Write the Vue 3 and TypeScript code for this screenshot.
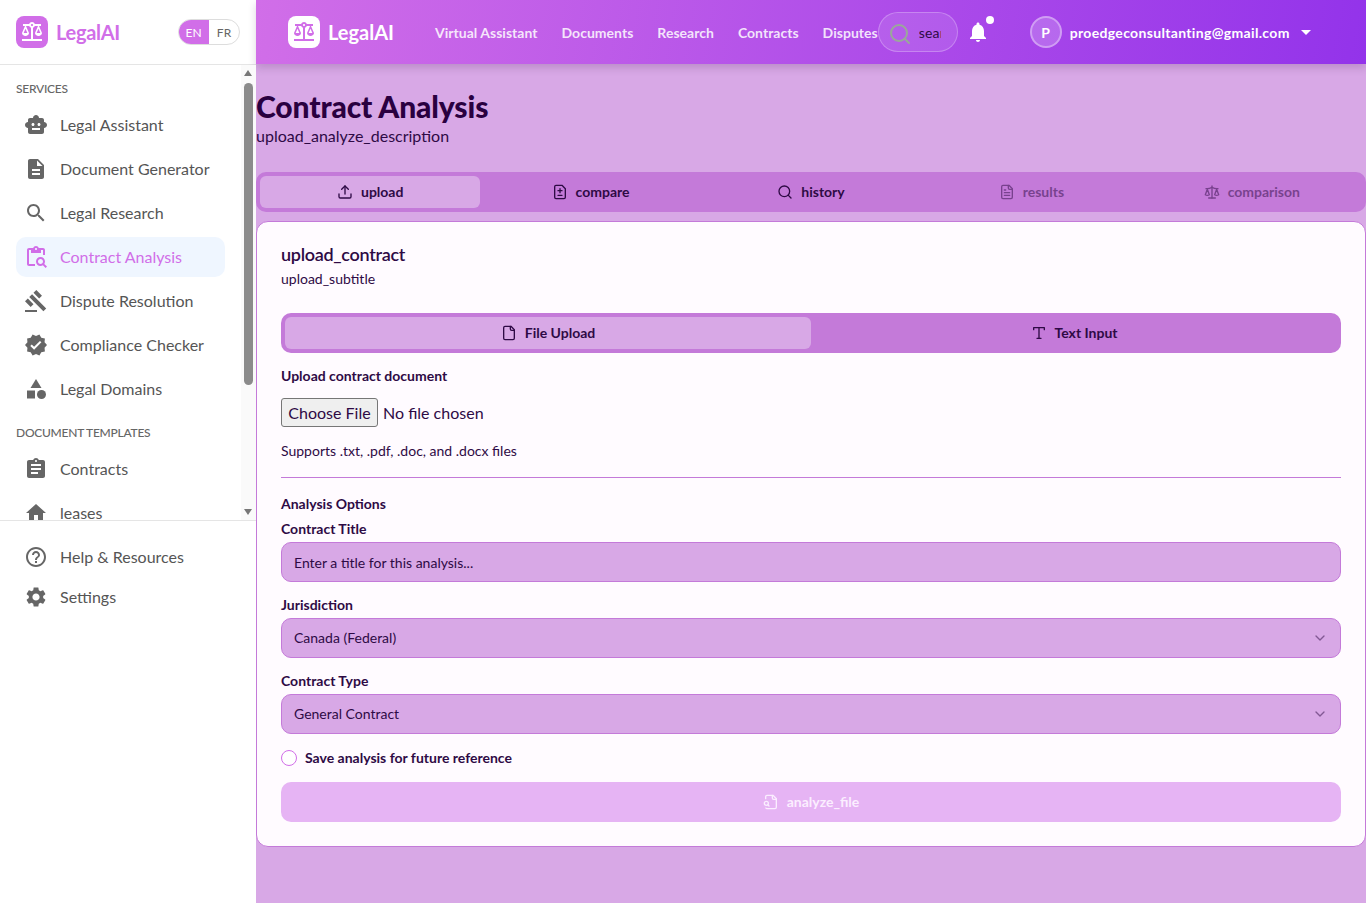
<template>
  <div class="app">
    <aside class="sidebar">
      <div class="side-head">
        <div class="brand">
          <div class="logo logo--side">
            <svg viewBox="0 0 24 24" class="mi" width="24" height="24"><path :d="balance" /></svg>
          </div>
          <span class="brand-name">LegalAI</span>
        </div>
        <div class="lang">
          <span class="lang-on">EN</span>
          <span class="lang-off">FR</span>
        </div>
      </div>

      <div class="side-scroll">
        <nav class="side-nav">
          <template v-for="group in navGroups" :key="group.title">
            <p class="group-title">{{ group.title }}</p>
            <a v-for="item in group.items" :key="item.label" class="nav-item" :class="{ 'nav-item--active': item.active }">
              <svg viewBox="0 0 24 24" width="24" height="24" class="mi">
                <path v-for="d in item.icon" :key="d" :d="d" />
                <circle v-if="item.circle" cx="17.5" cy="17.5" r="4.5" />
              </svg>
              <span>{{ item.label }}</span>
            </a>
          </template>
        </nav>
        <div class="fake-scrollbar">
          <span class="arrow arrow--up"></span>
          <span class="thumb"></span>
          <span class="arrow arrow--down"></span>
        </div>
      </div>

      <div class="side-foot">
        <a v-for="item in footItems" :key="item.label" class="foot-item">
          <svg viewBox="0 0 24 24" width="24" height="24" class="mi"><path :d="item.icon" /></svg>
          <span>{{ item.label }}</span>
        </a>
      </div>
    </aside>

    <div class="main">
      <header class="topbar">
        <div class="brand brand--top">
          <div class="logo logo--top">
            <svg viewBox="0 0 24 24" class="mi" width="24" height="24"><path :d="balance" /></svg>
          </div>
          <span class="brand-name-top">LegalAI</span>
        </div>
        <nav class="top-nav">
          <a v-for="link in topLinks" :key="link">{{ link }}</a>
        </nav>
        <div class="search">
          <svg viewBox="0 0 24 24" width="24" height="24" class="search-ic"><circle cx="11" cy="11" r="8" /><path d="m21 21-4.3-4.3" /></svg>
          <input class="search-input" type="text" placeholder="search..." />
        </div>
        <div class="bell">
          <svg viewBox="0 0 24 24" width="24" height="24"><path :d="bellPath" /></svg>
          <span class="bell-dot"></span>
        </div>
        <div class="user">
          <span class="avatar">P</span>
          <span class="email">proedgeconsultanting@gmail.com</span>
          <svg viewBox="0 0 24 24" width="24" height="24"><path d="M7 10l5 5 5-5z" /></svg>
        </div>
      </header>

      <main class="content">
        <h1 class="page-title">Contract Analysis</h1>
        <p class="page-desc">upload_analyze_description</p>

        <div class="tabs">
          <button v-for="tab in tabs" :key="tab.label" class="tab" :class="{ 'tab--active': tab.active, 'tab--off': tab.off }">
            <svg viewBox="0 0 24 24" width="16" height="16" class="ln"><path v-for="d in tab.icon" :key="d" :d="d" /></svg>
            <span>{{ tab.label }}</span>
          </button>
        </div>

        <section class="card">
          <h2 class="card-title">upload_contract</h2>
          <p class="card-sub">upload_subtitle</p>

          <div class="subtabs">
            <button class="subtab subtab--active">
              <svg viewBox="0 0 24 24" width="16" height="16" class="ln"><path v-for="d in fileIcon" :key="d" :d="d" /></svg>
              <span>File Upload</span>
            </button>
            <button class="subtab">
              <svg viewBox="0 0 24 24" width="16" height="16" class="ln"><path v-for="d in typeIcon" :key="d" :d="d" /></svg>
              <span>Text Input</span>
            </button>
          </div>

          <label class="label label--upload">Upload contract document</label>
          <input class="file" type="file" />
          <p class="help">Supports .txt, .pdf, .doc, and .docx files</p>
          <hr class="rule" />

          <p class="options">Analysis Options</p>
          <label class="label label--first">Contract Title</label>
          <input class="field" type="text" placeholder="Enter a title for this analysis..." />

          <label class="label">Jurisdiction</label>
          <div class="select">
            <span>Canada (Federal)</span>
            <svg viewBox="0 0 24 24" width="16" height="16" class="ln chev"><path d="m6 9 6 6 6-6" /></svg>
          </div>

          <label class="label">Contract Type</label>
          <div class="select">
            <span>General Contract</span>
            <svg viewBox="0 0 24 24" width="16" height="16" class="ln chev"><path d="m6 9 6 6 6-6" /></svg>
          </div>

          <div class="save">
            <span class="radio"></span>
            <span class="save-text">Save analysis for future reference</span>
          </div>

          <button class="analyze">
            <svg viewBox="0 0 24 24" width="16" height="16" class="ln"><path v-for="d in fileSearch" :key="d" :d="d" /><circle cx="5" cy="14" r="3" /></svg>
            <span>analyze_file</span>
          </button>
        </section>
      </main>
    </div>
  </div>
</template>

<script setup lang="ts">
const balance = "M13 7.83c.85-.3 1.53-.98 1.83-1.83H18l-3 7c0 1.66 1.57 3 3.5 3s3.5-1.34 3.5-3l-3-7h2V4h-6.17c-.41-1.17-1.52-2-2.83-2s-2.42.83-2.83 2H3v2h2l-3 7c0 1.66 1.57 3 3.5 3S9 14.66 9 13L6 6h3.17c.3.85.98 1.53 1.83 1.83V19H2v2h20v-2h-9V7.83zM20.37 13h-3.74l1.87-4.36L20.37 13zm-13 0H3.63L5.5 8.64 7.37 13zM12 6c-.55 0-1-.45-1-1 0-.55.45-1 1-1s1 .45 1 1c0 .55-.45 1-1 1z"
const scale = [
  "m16 16 3-8 3 8c-.87.65-1.92 1-3 1s-2.13-.35-3-1Z",
  "m2 16 3-8 3 8c-.87.65-1.92 1-3 1s-2.13-.35-3-1Z",
  "M7 21h10",
  "M12 3v18",
  "M3 7h2c2 0 5-1 7-2 2 1 5 2 7 2h2",
]
const fileIcon = ["M15 2H6a2 2 0 0 0-2 2v16a2 2 0 0 0 2 2h12a2 2 0 0 0 2-2V7Z", "M14 2v4a2 2 0 0 0 2 2h4"]
const typeIcon = ["M4 7V4h16v3", "M9 20h6", "M12 4v16"]
const fileSearch = [
  "M14 2v4a2 2 0 0 0 2 2h4",
  "M4.268 21a2 2 0 0 0 1.727 1H18a2 2 0 0 0 2-2V7l-5-5H6a2 2 0 0 0-2 2v3",
  "m9 18-1.5-1.5",
]
const bellPath = "M12 22c1.1 0 2-.9 2-2h-4c0 1.1.89 2 2 2zm6-6v-5c0-3.07-1.64-5.64-4.5-6.32V4c0-.83-.67-1.5-1.5-1.5s-1.5.67-1.5 1.5v.68C7.63 5.36 6 7.92 6 11v5l-2 2v1h16v-1l-2-2z"

const navGroups = [
  {
    title: "SERVICES",
    items: [
      { label: "Legal Assistant", icon: ["M20 9V7c0-1.1-.9-2-2-2h-3c0-1.66-1.34-3-3-3S9 3.34 9 5H6c-1.1 0-2 .9-2 2v2c-1.66 0-3 1.34-3 3s1.34 3 3 3v4c0 1.1.9 2 2 2h12c1.1 0 2-.9 2-2v-4c1.66 0 3-1.34 3-3s-1.34-3-3-3zM7.5 11.5c0-.83.67-1.5 1.5-1.5s1.5.67 1.5 1.5S9.83 13 9 13s-1.5-.67-1.5-1.5zM16 17H8v-2h8v2zm-1-4c-.83 0-1.5-.67-1.5-1.5S14.17 10 15 10s1.5.67 1.5 1.5S15.83 13 15 13z"] },
      { label: "Document Generator", icon: ["M14 2H6c-1.1 0-1.99.9-1.99 2L4 20c0 1.1.89 2 1.99 2H18c1.1 0 2-.9 2-2V8l-6-6zm2 16H8v-2h8v2zm0-4H8v-2h8v2zm-3-5V3.5L18.5 9H13z"] },
      { label: "Legal Research", icon: ["M15.5 14h-.79l-.28-.27C15.41 12.59 16 11.11 16 9.5 16 5.91 13.09 3 9.5 3S3 5.91 3 9.5 5.91 16 9.5 16c1.61 0 3.09-.59 4.23-1.57l.27.28v.79l5 4.99L20.49 19l-4.99-5zm-6 0C7.01 14 5 11.99 5 9.5S7.01 5 9.5 5 14 7.01 14 9.5 11.99 14 9.5 14z"] },
      { label: "Contract Analysis", active: true, icon: ["M5 5h2v3h10V5h2v5h2V5c0-1.1-.9-2-2-2h-4.18C14.4 1.84 13.3 1 12 1s-2.4.84-2.82 2H5c-1.1 0-2 .9-2 2v14c0 1.1.9 2 2 2h6v-2H5V5zm7-2c.55 0 1 .45 1 1s-.45 1-1 1-1-.45-1-1 .45-1 1-1z", "M20.3 18.9c.4-.7.7-1.5.7-2.4 0-2.5-2-4.5-4.5-4.5S12 14 12 16.5s2 4.5 4.5 4.5c.9 0 1.7-.3 2.4-.7l2.7 2.7 1.4-1.4-2.7-2.7zm-3.8.1c-1.4 0-2.5-1.1-2.5-2.5s1.1-2.5 2.5-2.5 2.5 1.1 2.5 2.5-1.1 2.5-2.5 2.5z"] },
      { label: "Dispute Resolution", icon: ["M1 21h12v2H1zM5.245 8.07l2.83-2.827 14.14 14.142-2.828 2.828zM12.317 1l5.657 5.656-2.83 2.83-5.654-5.66zM3.825 9.485l5.657 5.657-2.828 2.828-5.657-5.657z"] },
      { label: "Compliance Checker", icon: ["M23 12l-2.44-2.79.34-3.69-3.61-.82-1.89-3.2L12 2.96 8.6 1.5 6.71 4.69 3.1 5.5l.34 3.7L1 12l2.44 2.79-.34 3.7 3.61.82L8.6 22.5l3.4-1.47 3.4 1.46 1.89-3.19 3.61-.82-.34-3.69L23 12zm-12.91 4.72l-3.8-3.81 1.48-1.48 2.32 2.33 5.85-5.87 1.48 1.48-7.33 7.35z"] },
      { label: "Legal Domains", circle: true, icon: ["M12 2l-5.5 9h11z", "M3 13.5h8v8H3z"] },
    ],
  },
  {
    title: "DOCUMENT TEMPLATES",
    items: [
      { label: "Contracts", icon: ["M19 3h-4.18C14.4 1.84 13.3 1 12 1c-1.3 0-2.4.84-2.82 2H5c-1.1 0-2 .9-2 2v14c0 1.1.9 2 2 2h14c1.1 0 2-.9 2-2V5c0-1.1-.9-2-2-2zm-7 0c.55 0 1 .45 1 1s-.45 1-1 1-1-.45-1-1 .45-1 1-1zm2 14H7v-2h7v2zm3-4H7v-2h10v2zm0-4H7V7h10v2z"] },
      { label: "leases", icon: ["M10 20v-6h4v6h5v-8h3L12 3 2 12h3v8z"] },
    ],
  },
]

const footItems = [
  { label: "Help & Resources", icon: "M11 18h2v-2h-2v2zm1-16C6.48 2 2 6.48 2 12s4.48 10 10 10 10-4.48 10-10S17.52 2 12 2zm0 18c-4.41 0-8-3.59-8-8s3.59-8 8-8 8 3.59 8 8-3.59 8-8 8zm0-14c-2.21 0-4 1.79-4 4h2c0-1.1.9-2 2-2s2 .9 2 2c0 2-3 1.75-3 5h2c0-2.25 3-2.5 3-5 0-2.21-1.79-4-4-4z" },
  { label: "Settings", icon: "M19.14 12.94c.04-.3.06-.61.06-.94 0-.32-.02-.64-.07-.94l2.03-1.58c.18-.14.23-.41.12-.61l-1.92-3.32c-.12-.22-.37-.29-.59-.22l-2.39.96c-.5-.38-1.03-.7-1.62-.94l-.36-2.54c-.04-.24-.24-.41-.48-.41h-3.84c-.24 0-.43.17-.47.41l-.36 2.54c-.59.24-1.13.57-1.62.94l-2.39-.96c-.22-.08-.47 0-.59.22L2.74 8.87c-.12.21-.08.47.12.61l2.03 1.58c-.05.3-.09.63-.09.94s.02.64.07.94l-2.03 1.58c-.18.14-.23.41-.12.61l1.92 3.32c.12.22.37.29.59.22l2.39-.96c.5.38 1.03.7 1.62.94l.36 2.54c.05.24.24.41.48.41h3.84c.24 0 .44-.17.47-.41l.36-2.54c.59-.24 1.13-.56 1.62-.94l2.39.96c.22.08.47 0 .59-.22l1.92-3.32c.12-.22.07-.47-.12-.61l-2.01-1.58zM12 15.6c-1.98 0-3.6-1.62-3.6-3.6s1.62-3.6 3.6-3.6 3.6 1.62 3.6 3.6-1.62 3.6-3.6 3.6z" },
]

const topLinks = ["Virtual Assistant", "Documents", "Research", "Contracts", "Disputes"]

const tabs = [
  { label: "upload", active: true, icon: ["M21 15v4a2 2 0 0 1-2 2H5a2 2 0 0 1-2-2v-4", "M17 8l-5-5-5 5", "M12 3v12"] },
  { label: "compare", icon: ["M15 2H6a2 2 0 0 0-2 2v16a2 2 0 0 0 2 2h12a2 2 0 0 0 2-2V7Z", "M9 10h6", "M12 13V7", "M9 17h6"] },
  { label: "history", icon: ["M11 3a8 8 0 1 0 0 16 8 8 0 0 0 0-16Z", "m21 21-4.3-4.3"] },
  { label: "results", off: true, icon: ["M15 2H6a2 2 0 0 0-2 2v16a2 2 0 0 0 2 2h12a2 2 0 0 0 2-2V7Z", "M14 2v4a2 2 0 0 0 2 2h4", "M10 9H8", "M16 13H8", "M16 17H8"] },
  { label: "comparison", off: true, icon: scale },
]
</script>

<style scoped>
.app { display: flex; height: 903px; overflow: hidden; font-family: Lato, "Noto Sans", sans-serif; color: #2e0a45; }
.ln { fill: none; stroke: currentColor; stroke-width: 2; stroke-linecap: round; stroke-linejoin: round; flex-shrink: 0; }
.mi { fill: currentColor; flex-shrink: 0; }

.sidebar { width: 256px; flex-shrink: 0; background: #fff; display: flex; flex-direction: column; }
.side-head { height: 64px; flex-shrink: 0; padding: 0 16px; display: flex; align-items: center; justify-content: space-between; border-bottom: 1px solid #e5e5e5; }
.brand { display: flex; align-items: center; gap: 8px; }
.logo { width: 32px; height: 32px; border-radius: 8px; display: flex; align-items: center; justify-content: center; }
.logo--side { background: #d16ee8; color: #fff; }
.logo--top { background: #fff; color: #d16ee8; }
.brand-name { font-size: 20px; font-weight: 700; letter-spacing: -0.3px; color: #d16ee8; }
.lang { display: flex; width: 62px; height: 26px; box-sizing: border-box; border: 1px solid #ddd; border-radius: 13px; overflow: hidden; font-size: 12px; line-height: 26px; text-align: center; }
.lang-on { width: 31px; margin: -1px 0 -1px -1px; line-height: 28px; background: #d16ee8; color: #fff; }
.lang-off { flex: 1; color: #666; }

.side-scroll { position: relative; height: 455px; flex-shrink: 0; overflow: hidden; }
.side-nav { padding: 15px 31px 0 16px; }
.group-title { margin: 0 0 7px; height: 18px; font-size: 12px; line-height: 18px; font-weight: 500; letter-spacing: -0.25px; color: #666; }
.nav-item + .group-title { margin-top: 15px; }
.nav-item { display: flex; align-items: center; gap: 12px; height: 40px; margin-bottom: 4px; padding: 0 8px; border-radius: 10px; font-size: 16px; color: #555; }
.nav-item span, .foot-item span { margin-top: -2px; }
.nav-item .mi { color: #666; }
.nav-item--active { background: #eff6ff; color: #d16ee8; }
.nav-item--active .mi { color: #d16ee8; }
.fake-scrollbar { position: absolute; top: 0; right: 0; bottom: 0; width: 15px; background: #fafafa; }
.thumb { position: absolute; left: 3px; top: 18px; width: 9px; height: 302px; border-radius: 5px; background: #8b8b8b; }
.arrow { position: absolute; left: 3px; width: 0; height: 0; border-left: 4.5px solid transparent; border-right: 4.5px solid transparent; }
.arrow--up { top: 5px; border-bottom: 6px solid #777; }
.arrow--down { bottom: 5px; border-top: 6px solid #777; }

.side-foot { border-top: 1px solid #e5e5e5; padding: 16px 16px; }
.foot-item { display: flex; align-items: center; gap: 12px; height: 40px; padding: 0 8px; font-size: 16px; color: #555; }
.foot-item .mi { color: #666; }

.main { flex: 1; min-width: 0; display: flex; flex-direction: column; background: #d8a8e6; }
.topbar { height: 64px; flex-shrink: 0; padding-left: 32px; display: flex; align-items: center; color: #fff; background: linear-gradient(100deg, #d16ee8, #9333ea); box-shadow: 0 4px 8px rgba(60, 20, 80, 0.18); }
.brand--top { width: 147px; flex-shrink: 0; }
.brand-name-top { font-size: 20px; font-weight: 700; }
.top-nav { display: flex; gap: 24px; font-size: 14px; font-weight: 700; letter-spacing: 0.02px; color: rgba(255, 255, 255, 0.85); white-space: nowrap; }
.search { width: 80px; height: 40px; flex-shrink: 0; padding: 0 16px 0 9px; box-sizing: border-box; display: flex; align-items: center; gap: 7px; border: 1px solid rgba(255, 255, 255, 0.25); border-radius: 20px; background: rgba(255, 255, 255, 0.1); }
.search-ic { fill: none; stroke: #9aa89a; stroke-width: 2; stroke-linecap: round; flex-shrink: 0; margin-top: 4px; }
.search-input { width: 23px; min-width: 0; padding: 0; border: 0; outline: 0; background: transparent; font: 14px Lato, sans-serif; letter-spacing: 0.2px; margin-top: 1px; }
.search-input::placeholder { color: #2e0a45; opacity: 1; }
.bell { position: relative; width: 24px; height: 24px; margin-left: 8px; flex-shrink: 0; fill: #fff; }
.bell-dot { position: absolute; top: -4px; left: 20px; width: 8px; height: 8px; border-radius: 50%; background: #fff; }
.user { margin-left: 40px; display: flex; align-items: center; gap: 8px; fill: #fff; }
.avatar { width: 32px; height: 32px; box-sizing: border-box; border: 2px solid rgba(255, 255, 255, 0.35); border-radius: 50%; background: rgba(255, 255, 255, 0.2); display: flex; align-items: center; justify-content: center; font-size: 14px; font-weight: 700; }
.email { font-size: 14px; font-weight: 700; letter-spacing: 0.33px; }
.user svg { margin-left: -4px; }

.content { flex: 1; min-height: 0; }
.page-title { margin: 24px 0 0; font-size: 30px; line-height: 36px; font-weight: 900; letter-spacing: -0.12px; color: #2a0040; }
.page-desc { margin: 0; font-size: 16px; line-height: 24px; color: #2e0a45; }
.tabs { margin-top: 24px; padding: 4px; height: 40px; box-sizing: border-box; display: grid; grid-template-columns: repeat(5, 1fr); background: #c47ad9; border-radius: 10px; }
.tab { display: flex; align-items: center; justify-content: center; gap: 8px; border: 0; border-radius: 6px; background: transparent; padding: 0; font: 700 14px Lato, sans-serif; color: #2e0a45; }
.tab span, .subtab span, .analyze span, .select span { margin-top: -2px; }
.tab--active { background: #d8a8e6; }
.tab--off { opacity: 0.5; }
.card { margin-top: 9px; padding: 24px; height: 626px; box-sizing: border-box; background: #fffbff; border: 1px solid #c47ad9; border-radius: 12px; }
.card-title { margin: -1px 0 0; font-size: 18px; line-height: 18px; font-weight: 600; letter-spacing: -0.3px; }
.card-sub { margin: 6px 0 0; font-size: 14px; line-height: 20px; }
.subtabs { margin-top: 24px; height: 40px; padding: 4px; box-sizing: border-box; display: grid; grid-template-columns: 1fr 1fr; background: #c47ad9; border-radius: 10px; }
.subtab { display: flex; align-items: center; justify-content: center; gap: 8px; border: 0; border-radius: 6px; background: transparent; padding: 0; font: 700 14px Lato, sans-serif; color: #2e0a45; }
.subtab--active { background: #d8a8e6; }
.label { display: block; margin-top: 13px; font-size: 14px; line-height: 20px; font-weight: 700; }
.label--first { margin-top: 5px; }
.file { display: block; margin-top: 12px; height: 29px; font: 16px Lato, sans-serif; color: #2e0a45; }
.file::file-selector-button { width: 97px; height: 29px; margin-right: 5px; padding: 0; font: 16px Lato, sans-serif; color: #2e0a45; background: #efefef; border: 1px solid #767676; border-radius: 3px; }
.help { margin: 14px 0 0; font-size: 14px; line-height: 20px; }
.rule { margin: 16px 0 0; border: 0; border-top: 1px solid #c47ad9; }
.options { margin: 16px 0 0; font-size: 14px; line-height: 20px; font-weight: 700; }
.field, .select { display: block; width: 100%; height: 40px; margin-top: 3px; box-sizing: border-box; padding: 0 12px; border: 1px solid #c47ad9; border-radius: 10px; background: #d8a8e6; font: 14px Lato, sans-serif; color: #2e0a45; outline: 0; }
.field::placeholder { color: #2e0a45; opacity: 1; }
.select { display: flex; align-items: center; justify-content: space-between; }
.chev { opacity: 0.5; }
.save { margin-top: 14px; height: 20px; display: flex; align-items: center; gap: 8px; font-size: 14px; font-weight: 700; }
.save-text { margin-top: -2px; }
.radio { width: 16px; height: 16px; box-sizing: border-box; border: 1px solid #d16ee8; border-radius: 50%; background: #fff; }
.analyze { margin-top: 14px; width: 100%; height: 40px; display: flex; align-items: center; justify-content: center; gap: 8px; border: 0; border-radius: 10px; background: #e6b4f4; color: #fbeeff; font: 700 14px Lato, sans-serif; }
</style>

<style>
html, body { margin: 0; overflow: hidden; }
</style>
